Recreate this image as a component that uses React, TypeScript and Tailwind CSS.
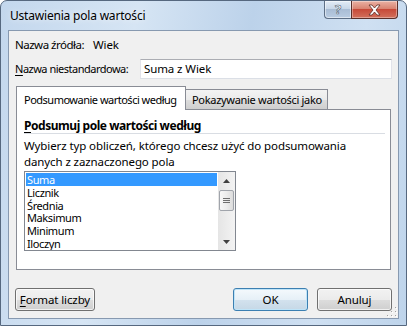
import React from 'react';

const items = ['Suma', 'Licznik', 'Średnia', 'Maksimum', 'Minimum', 'Iloczyn'];

const TitleBar = () => (
  <div className="flex h-[29px] items-start justify-between">
    <span className="mt-[6px] pl-[2px] text-[12px] tracking-[-0.2px] text-black [text-shadow:0_0_6px_rgba(255,255,255,0.9)]">
      Ustawienia pola wartości
    </span>
    <div className="mr-[1px] flex">
      <div className="flex h-[18px] w-[27px] items-center justify-center rounded-bl-[4px] border border-r-0 border-t-0 border-[#5d6f86] bg-[linear-gradient(180deg,#e3ecf6_0%,#c8d7e8_45%,#a9bdd5_50%,#b9cce2_100%)] shadow-[inset_0_0_0_1px_rgba(255,255,255,0.5)]">
        <span className="text-[13px] font-bold leading-none text-white [-webkit-text-stroke:0.6px_#4a5a6e]">?</span>
      </div>
      <div className="flex h-[18px] w-[47px] items-center justify-center rounded-br-[4px] border border-t-0 border-[#5a2f2a] bg-[linear-gradient(180deg,#eab2a4_0%,#d98472_45%,#c74a39_50%,#d2705c_100%)] shadow-[inset_0_0_0_1px_rgba(255,255,255,0.35)]">
        <svg width="15" height="12" viewBox="0 0 15 12">
          <path
            d="M2 1h3l2.5 3L10 1h3L9 6l4 5h-3L7.5 8 5 11H2l4-5z"
            fill="#fff"
            stroke="#5b2b24"
            strokeWidth="0.8"
            strokeLinejoin="round"
          />
        </svg>
      </div>
    </div>
  </div>
);

const Arrow = ({ up }: { up?: boolean }) => (
  <div className="flex h-[17px] items-center justify-center">
    <svg width="7" height="4" viewBox="0 0 7 4">
      <path d={up ? 'M3.5 0L7 4H0z' : 'M0 0h7L3.5 4z'} fill="#404040" />
    </svg>
  </div>
);

const ScrollBar = () => (
  <div className="flex w-[17px] flex-col bg-[linear-gradient(90deg,#e5e5e5_0%,#f3f3f3_100%)]">
    <Arrow up />
    <div className="mx-[1px] mt-[1px] flex h-[21px] flex-col items-center justify-center gap-[1px] rounded-[2px] border border-[#a0a4ab] bg-[linear-gradient(90deg,#f7f7f7_0%,#ececec_50%,#dcdcdc_100%)]">
      <span className="h-px w-[7px] bg-[#6e6e6e]" />
      <span className="h-px w-[7px] bg-[#6e6e6e]" />
      <span className="h-px w-[7px] bg-[#6e6e6e]" />
    </div>
    <div className="flex-1" />
    <Arrow />
  </div>
);

const Button = ({ children, className = '', primary = false }: { children: React.ReactNode; className?: string; primary?: boolean }) => (
  <div
    className={`flex h-[23px] items-center justify-center rounded-[3px] border ${
      primary
        ? 'border-[#3c7fb1] bg-[linear-gradient(180deg,#f4f9fc_0%,#e6f0f7_50%,#d3e2ee_51%,#c6d8e6_100%)] shadow-[inset_0_0_0_1px_#bfe4f8]'
        : 'border-[#707070] bg-[linear-gradient(180deg,#f2f2f2_0%,#ebebeb_50%,#dddddd_51%,#cfcfcf_100%)] shadow-[inset_0_0_0_1px_rgba(255,255,255,0.7)]'
    } ${className}`}
  >
    {children}
  </div>
);

export default function App() {
  return (
    <div className="h-[326px] w-[407px] overflow-hidden whitespace-nowrap bg-white font-['Noto_Sans',sans-serif] text-[11.5px] tracking-[-0.1px] text-black">
      <div className="flex h-full flex-col rounded-t-[7px] border border-[#56687f] bg-[linear-gradient(100deg,#c3d7ed_0%,#d6e5f4_30%,#bcd2ea_55%,#cfe0f2_80%,#bed4eb_100%)] px-[7px] pb-[6px]">
        <TitleBar />
        <div className="relative flex flex-1 flex-col border border-[#8799b0] bg-[#f0f0f0] px-[6px]">
          <div className="mt-[6px] flex h-[16px] items-center">
            <span className="w-[78px] shrink-0 tracking-[-0.5px]">Nazwa źródła:</span>
            <span>Wiek</span>
          </div>
          <div className="mt-[6px] flex h-[20px] items-center">
            <span className="w-[125px] shrink-0 text-[11px] tracking-[-0.5px]">
              <span className="underline underline-offset-[2px]">N</span>azwa niestandardowa:
            </span>
            <div className="flex h-[20px] flex-1 items-center border border-[#abadb3] border-b-[#dbdfe6] border-l-[#e2e3ea] border-r-[#e2e3ea] bg-white pl-[3px]">
              Suma z Wiek
            </div>
          </div>

          <div className="mt-[7px] ml-[1px] flex h-[23px] items-end text-[11px]">
            <div className="relative z-10 -mb-px flex h-[24px] w-[170px] shrink-0 items-start border border-b-0 border-[#898c95] bg-white pl-[7px] pt-[5px] tracking-[-0.5px]">
              Podsumowanie wartości według
            </div>
            <div className="flex h-[20px] w-[142px] shrink-0 items-start border border-b-0 border-l-0 border-[#898c95] bg-[linear-gradient(180deg,#f3f3f3_0%,#ebebeb_50%,#dddddd_51%,#cfcfcf_100%)] pl-[6px] pt-[2px] tracking-[-0.3px]">
              Pokazywanie wartości jako
            </div>
          </div>
          <div className="ml-[1px] mr-[1px] flex h-[161px] flex-col border border-[#898c95] bg-white pl-[7px] pr-[5px]">
            <div className="mt-[8px] flex h-[16px] items-center border-b border-[#d9dde3] text-[12px] font-bold tracking-[-0.45px]">
              <span>
                <span className="underline underline-offset-[2px]">P</span>odsumuj pole wartości według
              </span>
            </div>
            <div className="mt-[4px] leading-[16px]">
              Wybierz typ obliczeń, którego chcesz użyć do podsumowania
              <br />
              danych z zaznaczonego pola
            </div>
            <div className="mt-[1px] flex h-[80px] w-[212px] border border-[#828790] bg-white">
              <div className="flex flex-1 flex-col px-[1px] pt-[1px] text-[11px] tracking-[-0.4px]">
                {items.map((item, i) => (
                  <div
                    key={item}
                    className={`h-[13px] overflow-hidden pl-[1px] leading-[13px] ${i === 0 ? 'bg-[#3399ff] text-white' : ''}`}
                  >
                    {item}
                  </div>
                ))}
              </div>
              <ScrollBar />
            </div>
          </div>

          <div className="mt-[18px] flex">
            <Button className="w-[80px]">
              <span>
                <span className="underline underline-offset-[2px]">F</span>ormat liczby
              </span>
            </Button>
            <Button primary className="ml-auto w-[75px]">
              OK
            </Button>
            <Button className="ml-[9px] w-[75px]">Anuluj</Button>
          </div>

          <svg className="absolute bottom-[1px] right-[1px]" width="11" height="11" viewBox="0 0 11 11">
            {[
              [9, 1],
              [9, 5],
              [5, 5],
              [9, 9],
              [5, 9],
              [1, 9],
            ].map(([x, y]) => (
              <g key={`${x}-${y}`}>
                <rect x={x + 1} y={y + 1} width="1" height="1" fill="#fff" />
                <rect x={x} y={y} width="1" height="1" fill="#a0a0a0" />
              </g>
            ))}
          </svg>
        </div>
      </div>
    </div>
  );
}
